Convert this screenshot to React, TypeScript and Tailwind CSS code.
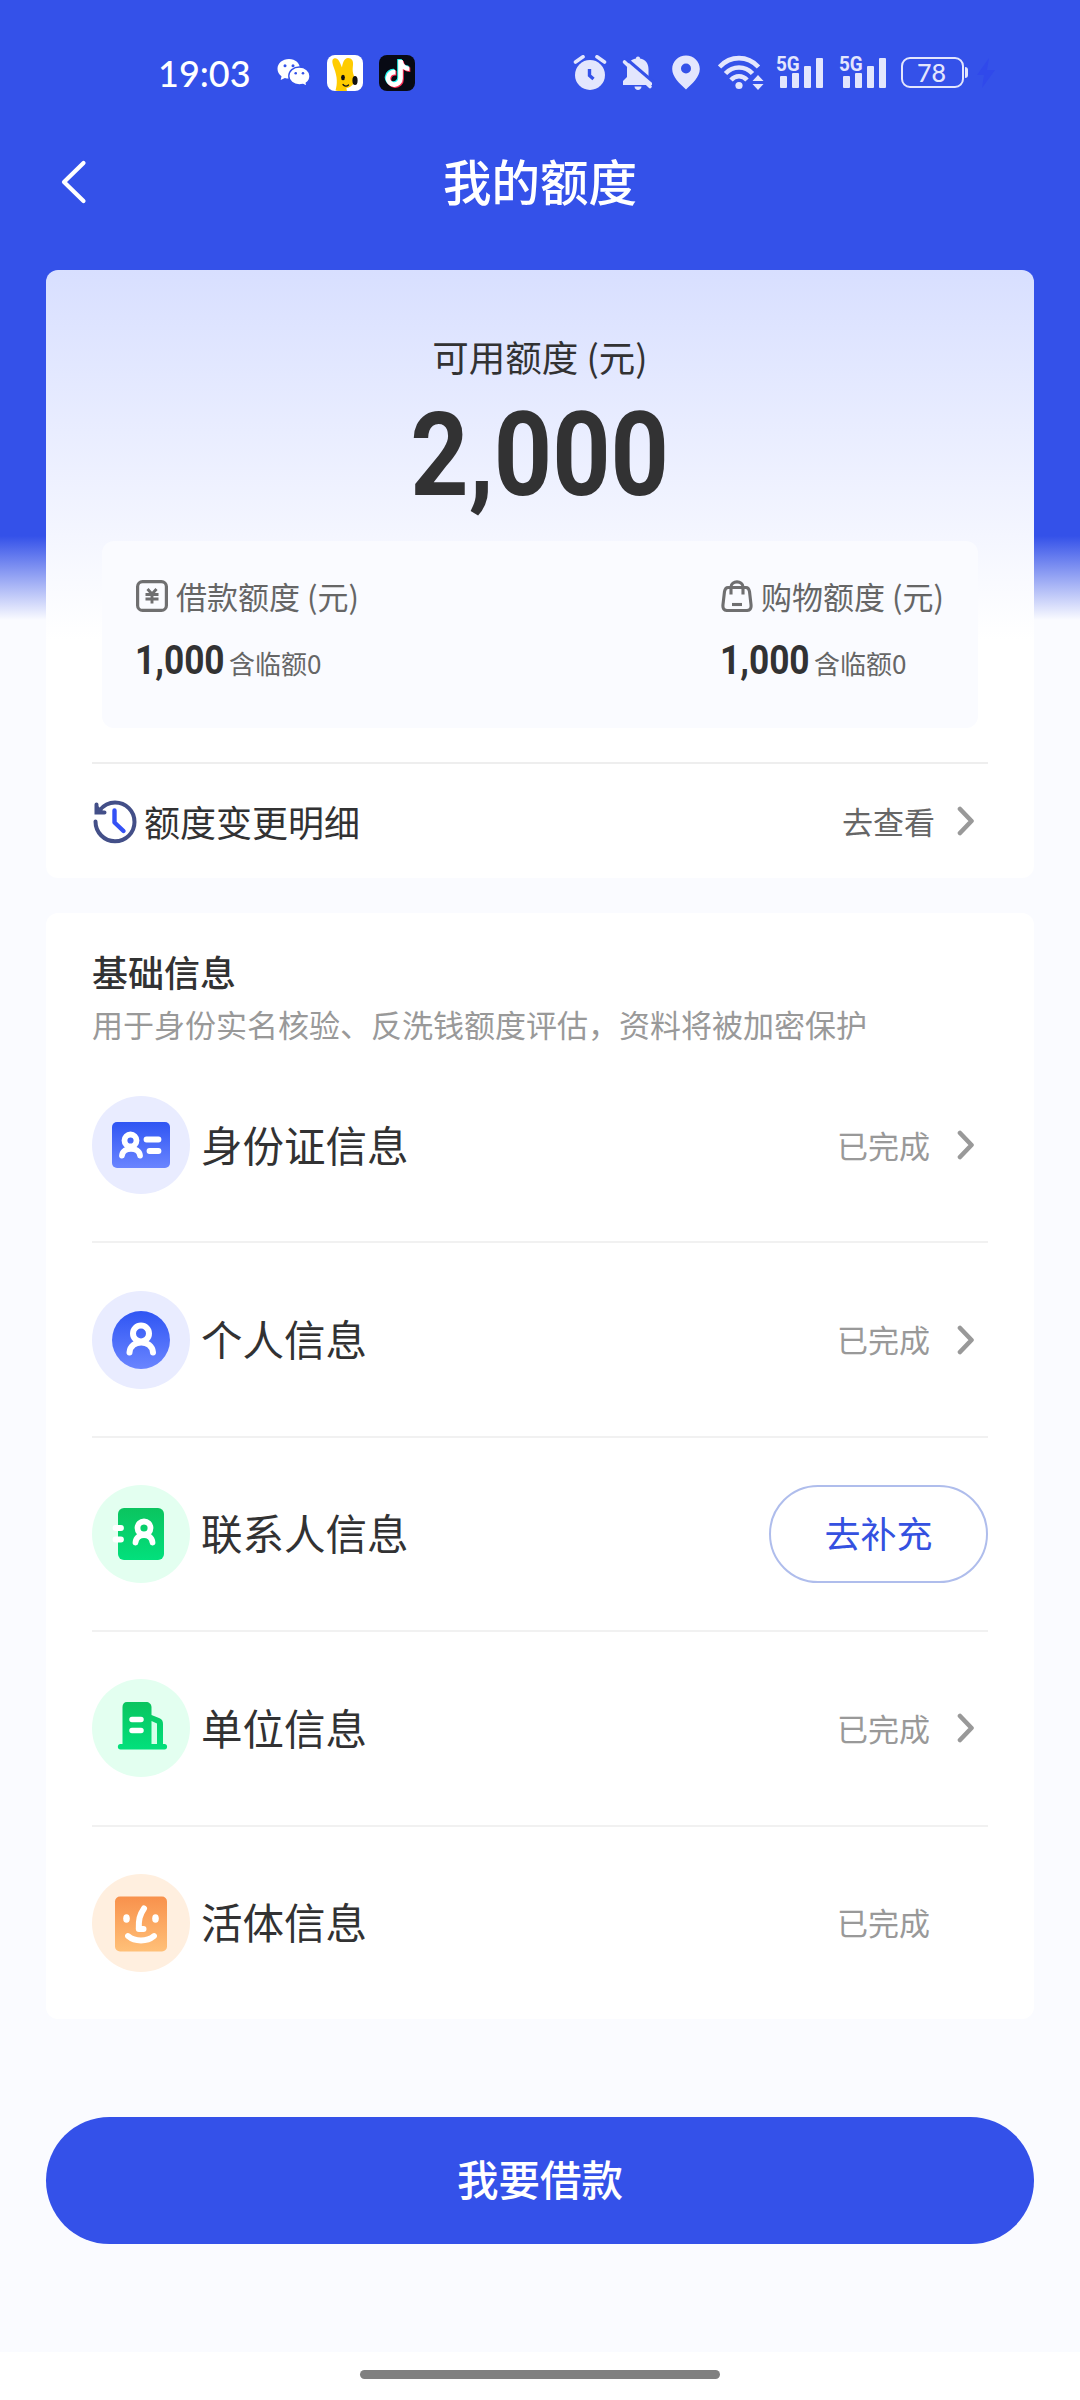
import React from 'react';
import { FaTiktok } from 'react-icons/fa6';

interface InfoItem {
  label: string;
  icon: React.ReactNode;
  status?: string;
  action?: string;
  arrow?: boolean;
}

const ChevronRight = () => (
  <svg width="18" height="30" viewBox="0 0 18 30" fill="none">
    <path d="M3 3L14.5 15L3 27" stroke="#999999" strokeWidth="4.6" strokeLinecap="round" strokeLinejoin="round" />
  </svg>
);

const WechatIcon = () => (
  <svg width="34" height="30" viewBox="0 0 34 30">
    <path d="M12 1C5.500 1 .5 5.300 .5 10.800C.5 13.800 2 16.500 4.500 18.300L3.700 22L7.900 20C9.200 20.400 10.600 20.600 12 20.600C18.500 20.600 23 16.300 23 10.800C23 5.300 18.500 1 12 1Z" fill="#fff" />
    <path d="M22.300 9C16.300 9 11.800 13 11.800 18C11.800 23 16.300 27 22.300 27C23.600 27 24.800 26.800 26 26.500L30 28.500L29.300 25C31.600 23.400 33 21 33 18C33 13 28.300 9 22.300 9Z" fill="#fff" stroke="#3451e9" strokeWidth="1.400" />
    <g fill="#3451e9">
      <circle cx="8" cy="7.800" r="1.500" />
      <circle cx="16" cy="7.800" r="1.500" />
      <circle cx="18.700" cy="15.300" r="1.300" />
      <circle cx="26" cy="15.300" r="1.300" />
    </g>
  </svg>
);

const BunnyIcon = () => (
  <svg width="36" height="36" viewBox="0 0 36 36">
    <rect width="36" height="36" rx="8" fill="#fff" />
    <path d="M8.500 35.500C10.500 29 10.500 22 7 13C5 7.500 4.500 4 7.500 3.200C11 2.500 13 7 15 12.500C15.600 8 17 3.500 21 3C25 3 26.500 6 26 10C25.500 15 25.500 17 27 21C28.500 27 26 32 19.500 33C19.500 34 19.600 35 20 36H11Z" fill="#fc0" />
    <ellipse cx="16" cy="22.500" rx="1.900" ry="2.700" fill="#111" />
    <ellipse cx="28" cy="25.500" rx="2.600" ry="4.500" fill="#111" />
    <path d="M16 29.500C17.500 31.500 20 31.500 21.500 30" stroke="#111" strokeWidth="1.300" fill="none" strokeLinecap="round" />
  </svg>
);

const TiktokIcon = () => (
  <span className="relative block h-9 w-9 rounded-lg bg-[#080a14]">
    <FaTiktok size={27} className="absolute left-1 top-[4px] text-[#25f4ee]" />
    <FaTiktok size={27} className="absolute left-[6px] top-[6px] text-[#fe2c55]" />
    <FaTiktok size={27} className="absolute left-[5px] top-[5px] text-white" />
  </span>
);

const AlarmIcon = () => (
  <svg width="34" height="36" viewBox="0 0 34 36">
    <circle cx="17" cy="20" r="15" fill="#e3e6fd" />
    <path d="M2.500 7L10 1.800M31.500 7L24 1.800" stroke="#e3e6fd" strokeWidth="3.600" strokeLinecap="round" />
    <path d="M16.500 14V20.500L20.500 24" stroke="#3451e9" strokeWidth="3.400" fill="none" />
  </svg>
);

const BellOffIcon = () => (
  <svg width="34" height="36" viewBox="0 0 34 36">
    <path d="M17 1.500C18.300 1.500 19 2.300 19 3.600C24.500 4.500 27.500 8.800 27.500 14V22L31 26V30H2V26L6 22V14C6 8.800 9.500 4.500 15 3.600C15 2.300 15.700 1.500 17 1.500Z" fill="#e3e6fd" />
    <path d="M13.500 31.500H20.500C20.500 36 13.500 36 13.500 31.500Z" fill="#e3e6fd" />
    <path d="M5 3.500L33 27.500" stroke="#3451e9" strokeWidth="3" />
    <path d="M3.500 7L29 31.500" stroke="#e3e6fd" strokeWidth="3.600" strokeLinecap="round" />
  </svg>
);

const PinIcon = () => (
  <svg width="28" height="35" viewBox="0 0 28 35">
    <path d="M14 .5C6.300 .5 .2 6.500 .2 14C.2 22 8 29 14 34.500C20 29 27.800 22 27.800 14C27.800 6.500 21.700 .5 14 .5Z" fill="#e3e6fd" />
    <circle cx="14" cy="13.500" r="5" fill="#3451e9" />
  </svg>
);

const WifiIcon = () => (
  <svg width="46" height="36" viewBox="0 0 46 36" fill="none">
    <g stroke="#e3e6fd" strokeWidth="4.600">
      <path d="M1.500 12C12.500 .2 29.500 .2 40.500 12" />
      <path d="M7.500 18.500C15 10.500 27 10.500 34.500 18.500" />
      <path d="M13 25C17.500 20 24.500 20 29 25" />
    </g>
    <circle cx="21" cy="30.500" r="3.600" fill="#e3e6fd" />
    <path d="M40 20L45.500 26H34.500ZM40 35L45.500 29H34.500Z" fill="#e3e6fd" />
  </svg>
);

const SignalIcon = () => (
  <div className="relative h-9 w-[48px]">
    <span className="absolute -top-[2px] left-0 origin-left scale-x-[.9] font-['Roboto',sans-serif] text-[21px] font-bold leading-[22px] text-[#e3e6fd]">5G</span>
    <svg width="48" height="36" viewBox="0 0 48 36" fill="#e3e6fd" className="block">
      <rect x="4" y="21" width="7" height="12" rx="1" />
      <rect x="16" y="18" width="7" height="15" rx="1" />
      <rect x="28" y="11" width="7" height="22" rx="1" />
      <rect x="40" y="3" width="7" height="30" rx="1" />
    </svg>
  </div>
);

const BatteryIcon = () => (
  <div className="flex items-center">
    <div className="flex h-[31px] w-[63px] items-center justify-center rounded-[9px] border-[2.5px] border-[#e3e6fd] pr-[2px] font-['Lato',sans-serif] text-[25px] font-medium leading-none text-[#e3e6fd]">78</div>
    <div className="ml-px h-[11px] w-[3px] rounded-r bg-[#e3e6fd]" />
    <svg width="20" height="32" viewBox="0 0 20 32" className="ml-2">
      <path d="M13 1L1 18H8L6 31L19 13H11Z" fill="#3049eb" />
    </svg>
  </div>
);

const YuanIcon = () => (
  <svg width="32" height="32" viewBox="0 0 32 32" fill="none" stroke="#6f6f70">
    <rect x="1.600" y="1.600" width="28.800" height="28.800" rx="5" strokeWidth="3.200" />
    <path d="M11.500 9L16 14L20.500 9M16 14V23.500M9.500 14.500H22.500M9.500 19H22.500" strokeWidth="2.900" />
  </svg>
);

const BagIcon = () => (
  <svg width="32" height="32" viewBox="0 0 32 32" fill="none" stroke="#6f6f70" strokeWidth="3.100">
    <path d="M7 7.500H25C27.500 7.500 28 9 28.500 11.500L30 24.500C30.500 28.500 29 30.500 25.500 30.500H6.500C3 30.500 1.500 28.500 2 24.500L3.500 11.500C4 9 4.500 7.500 7 7.500Z" />
    <path d="M10 14.500V7C10 .2 22 .2 22 7V14.500" />
    <path d="M11 24.500H21" />
  </svg>
);

const HistoryIcon = () => (
  <svg width="44" height="44" viewBox="0 0 44 44" fill="none" className="ml-px mt-px">
    <path d="M2.500 21.500C2.500 32.500 11.300 41.300 22 41.300C33 41.300 41.500 32.500 41.500 22C41.500 11 32.800 2.600 22 2.600C15.500 2.600 10.500 5.500 6.500 10.500" stroke="#434f88" strokeWidth="4" strokeLinecap="round" />
    <path d="M3.500 4.500V12.500H11.500" stroke="#434f88" strokeWidth="4" strokeLinecap="round" />
    <path d="M3.500 4.500L11.500 12.500H3.500Z" fill="#434f88" />
    <path d="M21.500 10.500V22.500L30.500 31" stroke="#3451f5" strokeWidth="4.400" strokeLinecap="round" strokeLinejoin="round" />
  </svg>
);

const BlueGradient = ({ id }: { id: string }) => (
  <linearGradient id={id} x1="0" y1="0" x2="0" y2="1">
    <stop offset="0" stopColor="#2f55f3" />
    <stop offset="1" stopColor="#6a85ff" />
  </linearGradient>
);

const GreenGradient = ({ id }: { id: string }) => (
  <linearGradient id={id} x1="0" y1="0" x2="0" y2="1">
    <stop offset="0" stopColor="#0bc45f" />
    <stop offset="1" stopColor="#02e07c" />
  </linearGradient>
);

const IdCardIcon = () => (
  <svg width="98" height="98" viewBox="0 0 98 98" fill="none">
    <defs><BlueGradient id="idCard" /></defs>
    <circle cx="49" cy="49" r="49" fill="#e9ecff" />
    <rect x="20" y="26" width="58" height="46" rx="5" fill="url(#idCard)" />
    <g stroke="#fff" strokeWidth="5.800" strokeLinecap="round">
      <circle cx="38.500" cy="44.500" r="6" />
      <path d="M30 59.500C31 50.500 47 50.500 48 59.500" />
      <path d="M54.500 43.500H66.500M57.500 55H66.500" />
    </g>
  </svg>
);

const PersonIcon = () => (
  <svg width="98" height="98" viewBox="0 0 98 98" fill="none">
    <defs><BlueGradient id="person" /></defs>
    <circle cx="49" cy="49" r="49" fill="#e9ecff" />
    <circle cx="49" cy="49" r="29" fill="url(#person)" />
    <g stroke="#fff" strokeWidth="6" strokeLinecap="round">
      <circle cx="49" cy="42.500" r="8" />
      <path d="M37.500 61.500C38.500 48 60 48 61 61.500" />
    </g>
  </svg>
);

const ContactIcon = () => (
  <svg width="98" height="98" viewBox="0 0 98 98" fill="none">
    <defs><GreenGradient id="contact" /></defs>
    <circle cx="49" cy="49" r="49" fill="#e3fff0" />
    <rect x="26" y="23" width="46" height="52" rx="6" fill="url(#contact)" />
    <g stroke="#fff" strokeWidth="5.800" strokeLinecap="round">
      <circle cx="52" cy="43" r="6.500" />
      <path d="M43.500 57.500C44.500 47.500 59.500 47.500 60.500 57.500" />
      <path d="M23.500 43H29M23.500 54.500H29" />
    </g>
  </svg>
);

const CompanyIcon = () => (
  <svg width="98" height="98" viewBox="0 0 98 98" fill="none">
    <defs><GreenGradient id="company" /></defs>
    <circle cx="49" cy="49" r="49" fill="#e3fff0" />
    <path d="M35 23H54C57 23 59.500 25 59.500 28V36L67 39C70 40 71 42 71 45V65H72.500C76 65 76 70.500 72.500 70.500H28.500C25 70.500 25 65 28.500 65H30.500V28C30.500 25 32 23 35 23Z" fill="url(#company)" />
    <path d="M59.500 42L65 44.500V65H59.500Z" fill="#d5ffe9" />
    <path d="M40 40.500H49M40 51.500H49" stroke="#fff" strokeWidth="5.500" strokeLinecap="round" />
  </svg>
);

const FaceIcon = () => (
  <svg width="98" height="98" viewBox="0 0 98 98" fill="none">
    <defs>
      <linearGradient id="face" x1="0" y1="0" x2="0" y2="1">
        <stop offset="0" stopColor="#f8914c" />
        <stop offset="1" stopColor="#ffc078" />
      </linearGradient>
    </defs>
    <circle cx="49" cy="49" r="49" fill="#ffefdf" />
    <rect x="23" y="22.500" width="52" height="55" rx="5" fill="url(#face)" />
    <g fill="#fff">
      <ellipse cx="34.500" cy="44.500" rx="3.300" ry="4.300" />
      <ellipse cx="63.500" cy="44.500" rx="3.300" ry="4.300" />
    </g>
    <path d="M52 34.500C47.500 41 46.500 46 46.800 55H51.500" stroke="#fff" strokeWidth="6" strokeLinecap="round" strokeLinejoin="round" />
    <path d="M36 62C43 68 55 68 62 62" stroke="#fff" strokeWidth="5.800" strokeLinecap="round" />
  </svg>
);

const items: InfoItem[] = [
  { label: '身份证信息', icon: <IdCardIcon />, status: '已完成', arrow: true },
  { label: '个人信息', icon: <PersonIcon />, status: '已完成', arrow: true },
  { label: '联系人信息', icon: <ContactIcon />, action: '去补充' },
  { label: '单位信息', icon: <CompanyIcon />, status: '已完成', arrow: true },
  { label: '活体信息', icon: <FaceIcon />, status: '已完成' },
];

const StatusBar = () => (
  <div className="flex h-[145px] items-center justify-between pl-[158px] pr-[84px]">
    <div className="flex items-center">
      <span className="w-[119px] font-['Lato',sans-serif] text-[36px] font-medium leading-none text-white">19:03</span>
      <WechatIcon />
      <div className="ml-4 flex gap-4">
        <BunnyIcon />
        <TiktokIcon />
      </div>
    </div>
    <div className="flex items-center">
      <AlarmIcon />
      <div className="ml-[14px]"><BellOffIcon /></div>
      <div className="ml-[17px]"><PinIcon /></div>
      <div className="ml-[18px]"><WifiIcon /></div>
      <div className="ml-3 flex gap-[15px]">
        <SignalIcon />
        <SignalIcon />
      </div>
      <div className="ml-[14px]"><BatteryIcon /></div>
    </div>
  </div>
);

const Quota = ({ icon, label }: { icon: React.ReactNode; label: string }) => (
  <div>
    <div className="flex h-[38px] items-center gap-2 text-[31px] text-[#666]">
      {icon}
      <span className="whitespace-nowrap">{label}</span>
    </div>
    <div className="mt-[21px] flex h-[48px] items-baseline">
      <span className="-ml-px w-[94px] origin-left scale-x-[.86] font-['Roboto',sans-serif] text-[41px] font-bold leading-[48px] text-[#323233]">1,000</span>
      <span className="text-[26px] leading-[30px] text-[#666]">含临额0</span>
    </div>
  </div>
);

export default function App() {
  return (
    <div className="flex h-[2400px] w-[1080px] flex-col overflow-hidden bg-[#fafbff] font-['Noto_Sans_CJK_SC',sans-serif] text-[#323233]">
      <div className="flex grow flex-col bg-[linear-gradient(to_bottom,#3451e9_0,#3451e9_536px,#fafbff_620px)]">
        <StatusBar />
        <header className="grid h-[73px] grid-cols-3 items-center pl-[60px] pr-[60px] text-white">
          <svg width="28" height="44" viewBox="0 0 28 44" fill="none">
            <path d="M23.500 3L4 22L23.500 41" stroke="#fff" strokeWidth="4.200" strokeLinecap="round" strokeLinejoin="round" />
          </svg>
          <h1 className="pb-[3px] text-center text-[48.5px] font-medium leading-none">我的额度</h1>
        </header>

        <section className="mx-[46px] mt-[52px] flex h-[608px] flex-col rounded-xl bg-[linear-gradient(to_bottom,#d8dfff_0,#ffffff_370px)] px-[46px]">
          <p className="mt-[67px] text-center text-[36.5px] leading-[40px]">可用额度 (元)</p>
          <p className="mt-[16px] text-center font-['Roboto',sans-serif] text-[117px] font-bold leading-[124px]">
            <span className="inline-block scale-x-[.87]">2,000</span>
          </p>
          <div className="mx-[10px] mt-6 flex h-[187px] justify-between rounded-xl bg-[#fafbff] px-[34px] pt-[36px]">
            <Quota icon={<YuanIcon />} label="借款额度 (元)" />
            <Quota icon={<BagIcon />} label="购物额度 (元)" />
          </div>
          <div className="mt-[34px] flex grow items-center border-t-2 border-[#eeeeee]">
            <HistoryIcon />
            <span className="ml-[7px] grow text-[36px]">额度变更明细</span>
            <span className="mr-[22px] text-[31px] text-[#666]">去查看</span>
            <span className="mr-[13px]"><ChevronRight /></span>
          </div>
        </section>

        <section className="mx-[46px] mt-[35px] rounded-xl bg-white px-[46px]">
          <h2 className="pt-[38px] text-[36px] font-medium leading-[40px]">基础信息</h2>
          <p className="mt-[14px] text-[31px] leading-[38px] text-[#999]">用于身份实名核验、反洗钱额度评估，资料将被加密保护</p>
          <ul className="mt-[6px] divide-y-2 divide-[#f1f1f1]">
            {items.map((item) => (
              <li key={item.label} className="flex h-[194.4px] items-center last:h-[192px]">
                {item.icon}
                <span className="ml-[11px] grow pb-[3px] text-[41.5px]">{item.label}</span>
                {item.status && <span className="text-[31px] text-[#999]">{item.status}</span>}
                {item.status && (
                  <span className="ml-[27px] mr-[13px] w-[18px]">{item.arrow && <ChevronRight />}</span>
                )}
                {item.action && (
                  <button className="h-[98px] w-[219px] rounded-full border-2 border-[#afbdec] pb-[3px] text-[36px] text-[#3451e0]">
                    {item.action}
                  </button>
                )}
              </li>
            ))}
          </ul>
        </section>

        <button className="mx-[46px] mt-[98px] h-[127px] rounded-full bg-[#3451e9] pb-[3px] text-[41.5px] font-medium text-white">
          我要借款
        </button>
      </div>

      <footer className="flex h-[48px] shrink-0 justify-center bg-white pt-[18px]">
        <div className="h-[9px] w-[360px] rounded-full bg-[#808080]" />
      </footer>
    </div>
  );
}
